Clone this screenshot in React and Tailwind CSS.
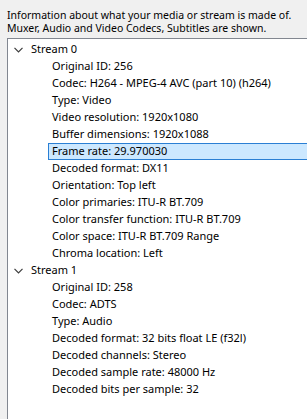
const streams = [
  {
    name: 'Stream 0',
    items: [
      'Original ID: 256',
      'Codec: H264 - MPEG-4 AVC (part 10) (h264)',
      'Type: Video',
      'Video resolution: 1920x1080',
      'Buffer dimensions: 1920x1088',
      'Frame rate: 29.970030',
      'Decoded format: DX11',
      'Orientation: Top left',
      'Color primaries: ITU-R BT.709',
      'Color transfer function: ITU-R BT.709',
      'Color space: ITU-R BT.709 Range',
      'Chroma location: Left',
    ],
  },
  {
    name: 'Stream 1',
    items: [
      'Original ID: 258',
      'Codec: ADTS',
      'Type: Audio',
      'Decoded format: 32 bits float LE (f32l)',
      'Decoded channels: Stereo',
      'Decoded sample rate: 48000 Hz',
      'Decoded bits per sample: 32',
    ],
  },
];

const Chevron = () => (
  <svg width="9" height="6" viewBox="0 0 9 6" className="block">
    <path d="M0.5 0.8 L4.5 4.8 L8.5 0.8" fill="none" stroke="#3c3c3c" strokeWidth="1.2" />
  </svg>
);

export default function App() {
  return (
    <div
      className="w-[307px] h-[419px] overflow-hidden bg-[#f0f0f0] text-black"
      style={{ fontFamily: '"Noto Sans", "Open Sans", sans-serif' }}
    >
      <p className="pl-[7px] pt-[9px] text-[10.5px] leading-[13px] whitespace-nowrap">
        Information about what your media or stream is made of.
        <br />
        Muxer, Audio and Video Codecs, Subtitles are shown.
      </p>
      <div className="ml-[7px] mt-[3px] w-[300px] h-[400px] bg-white border-l border-t border-[#828790] pt-[2px] text-[11px]">
        {streams.map((s) => (
          <div key={s.name}>
            <div className="h-[17px] flex items-center">
              <div className="w-[23px] flex justify-end pr-[8px]">
                <Chevron />
              </div>
              <span className="whitespace-nowrap">{s.name}</span>
            </div>
            {s.items.map((it) => {
              const selected = it.startsWith('Frame rate');
              return (
                <div key={it} className="h-[17px] pl-[40px]">
                  <div
                    className={
                      selected
                        ? 'h-full flex items-center pl-[3px] bg-[#cce8ff] border border-r-0 border-[#2a7fd4]'
                        : 'h-full flex items-center pl-[4px]'
                    }
                  >
                    <span className="whitespace-nowrap">{it}</span>
                  </div>
                </div>
              );
            })}
          </div>
        ))}
      </div>
    </div>
  );
}
